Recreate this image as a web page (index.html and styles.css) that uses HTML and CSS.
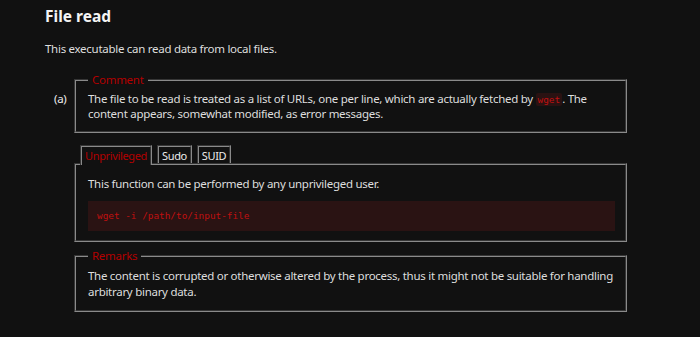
FILE: index.html
```html
<!DOCTYPE html>
<html lang="en">
<head>
<meta charset="utf-8">
<title>File read</title>
<link rel="stylesheet" href="styles.css">
</head>
<body>
<main class="content">
  <h1 class="title">File read</h1>
  <p class="intro">This executable can read data from local files.</p>

  <div class="item">
    <span class="item-label">(a)</span>
    <fieldset class="box comment">
      <legend class="box-legend">Comment</legend>
      <p class="box-text">The file to be read is treated as a list of URLs, one per line, which are actually fetched by <code class="inline-code">wget</code>. The content appears, somewhat modified, as error messages.</p>
    </fieldset>
  </div>

  <div class="tabs">
    <div class="tab-list">
      <span class="tab tab-active">Unprivileged</span>
      <span class="tab">Sudo</span>
      <span class="tab">SUID</span>
    </div>
    <div class="tab-panel">
      <p class="box-text">This function can be performed by any unprivileged user.</p>
      <pre class="code-block">wget -i /path/to/input-file</pre>
    </div>
  </div>

  <fieldset class="box remarks">
    <legend class="box-legend">Remarks</legend>
    <p class="box-text">The content is corrupted or otherwise altered by the process, thus it might not be suitable for handling arbitrary binary data.</p>
  </fieldset>
</main>
</body>
</html>
```

FILE: styles.css
```css
html, body {
  margin: 0;
  padding: 0;
  background: #111111;
}

body {
  color: #dedede;
  font-family: "Noto Sans", "Open Sans", sans-serif;
  font-size: 11.5px;
  line-height: 15.5px;
  letter-spacing: -0.28px;
}

.content {
  padding: 0 0 0 45px;
  width: 582px;
}

.title {
  margin: 0;
  padding-top: 6px;
  font-size: 15.5px;
  line-height: 20px;
  font-weight: 700;
  letter-spacing: 0;
  color: #f4f4f4;
}

.intro {
  margin: 15px 0 0 0;
}

.item {
  display: flex;
  align-items: flex-start;
  margin-top: 16px;
}

.item-label {
  width: 29px;
  padding: 18px 0 0 9px;
  box-sizing: border-box;
  color: #ececec;
}

.box {
  flex: 1;
  margin: 0;
  padding: 4px 8px 9px 12px;
  border: 2px groove #8a8a8a;
  min-width: 0;
}

.box-legend {
  color: #b30000;
  padding: 0 4px;
  margin-left: 0;
  font-size: 11.5px;
  line-height: 14px;
}

.box-text {
  margin: 0;
}

.inline-code {
  font-family: "DejaVu Sans Mono", monospace;
  font-size: 9.4px;
  line-height: 12px;
  letter-spacing: 0;
  color: #c01010;
  background: #2a1212;
  padding: 1px 2px;
  border-radius: 2px;
}

.tabs {
  margin: 12px 0 0 29px;
}

.tab-list {
  display: flex;
  gap: 5px;
  padding-left: 6px;
}

.tab {
  border: 2px groove #8a8a8a;
  border-bottom: none;
  padding: 1px 3px 0 3px;
  color: #ececec;
  font-size: 11px;
  letter-spacing: -0.35px;
  line-height: 15px;
}

.tab-active {
  color: #b30000;
  position: relative;
  margin-bottom: -2px;
  padding-bottom: 2px;
  background: #111111;
  z-index: 1;
}

.tab-panel {
  border: 2px groove #8a8a8a;
  padding: 11px 10px 9px 12px;
}

.code-block {
  margin: 10px 0 0 0;
  background: #2a1313;
  color: #c01010;
  font-family: "DejaVu Sans Mono", monospace;
  font-size: 9.4px;
  line-height: 14px;
  letter-spacing: 0;
  padding: 8px 9px;
}

.remarks {
  margin: 7px 0 0 29px;
  padding-top: 5px;
  padding-bottom: 11px;
}
```
